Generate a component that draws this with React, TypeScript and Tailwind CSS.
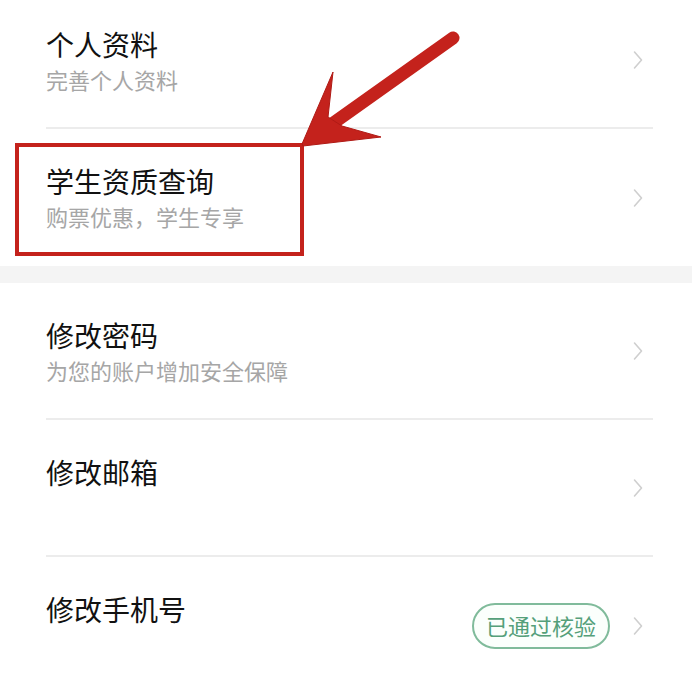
import React from "react";

const font = { fontFamily: '"Noto Sans CJK SC", "Noto Sans", sans-serif' };

function Chevron() {
  return (
    <svg width="10" height="20" viewBox="0 0 10 20" className="shrink-0">
      <polyline points="1.5,2 8.5,10 1.5,18" fill="none" stroke="#cfcfcf" strokeWidth="1.6" strokeLinejoin="round" strokeLinecap="round" />
    </svg>
  );
}

type RowProps = {
  title: string;
  sub?: string;
  badge?: string;
  divider?: boolean;
  first?: boolean;
};

function Row({ title, sub, badge, divider = true, first }: RowProps) {
  return (
    <div className={`ml-[46px] mr-[39px] flex h-[137px] items-center ${divider ? "border-b-2 border-[#ececec]" : ""} ${first ? "-mt-[8px]" : ""}`}>
      <div className="flex-1 self-start pt-[34px]">
        <div className="text-[28px] leading-[36px] text-[#111111]">{title}</div>
        {sub && <div className="mt-[3px] text-[22px] leading-[28px] text-[#a6a6a6]">{sub}</div>}
      </div>
      {badge && (
        <div className="mr-[23px] flex h-[46px] items-center rounded-full border-2 border-[#80bb9b] bg-[#fbfffc] px-[12px] text-[22px] text-[#55a07a]">
          {badge}
        </div>
      )}
      <div className="mr-[10px]">
        <Chevron />
      </div>
    </div>
  );
}

export default function App() {
  return (
    <div className="relative h-[677px] w-[692px] overflow-hidden bg-white" style={font}>
      <Row first title="个人资料" sub="完善个人资料" />
      <Row title="学生资质查询" sub="购票优惠，学生专享" divider={false} />
      <div className="h-[17px] bg-[#f4f4f4]" />
      <Row title="修改密码" sub="为您的账户增加安全保障" />
      <Row title="修改邮箱" />
      <Row title="修改手机号" badge="已通过核验" divider={false} />

      {/* annotation overlay */}
      <div className="absolute left-[15px] top-[143px] h-[113px] w-[289px] border-[4px] border-[#c4221c]" />
      <svg className="absolute left-0 top-0" width="692" height="677" viewBox="0 0 692 677">
        <line x1="453" y1="38" x2="332" y2="124" stroke="#c4221c" strokeWidth="13" strokeLinecap="round" />
        <polygon points="302,144 333,72 328,117 342,126 381,137 303,146" fill="#c4221c" stroke="#b01a15" strokeWidth="1" strokeLinejoin="round" />
      </svg>
    </div>
  );
}
